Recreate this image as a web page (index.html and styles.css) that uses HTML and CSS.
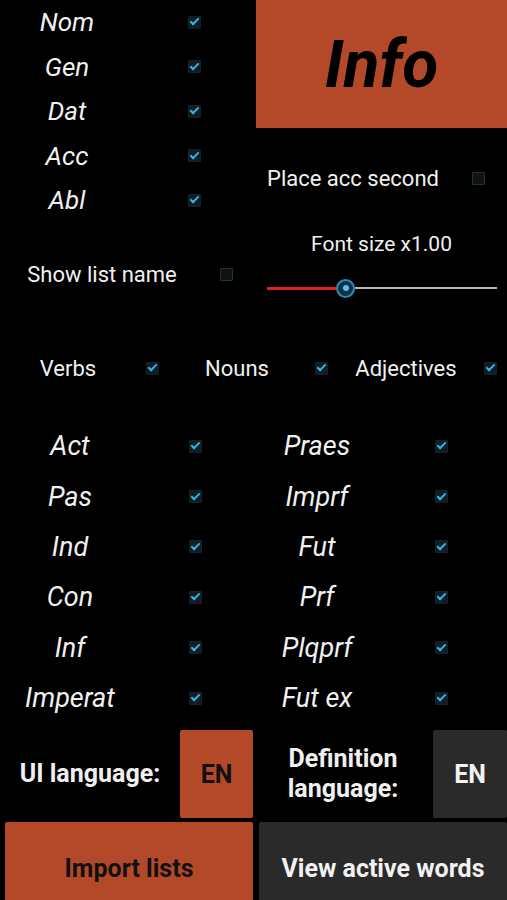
FILE: index.html
```html
<!DOCTYPE html>
<html lang="en">
<head>
    <meta charset="UTF-8">
    <meta name="viewport" content="width=device-width, initial-scale=1.0">
    <title>Settings</title>
    <link rel="stylesheet" href="styles.css">
</head>
<body>
    <div class="top">
        <div class="left">
            <div class="case-row"><span class="case">Nom</span><span class="check on"></span></div>
            <div class="case-row"><span class="case">Gen</span><span class="check on"></span></div>
            <div class="case-row"><span class="case">Dat</span><span class="check on"></span></div>
            <div class="case-row"><span class="case">Acc</span><span class="check on"></span></div>
            <div class="case-row"><span class="case">Abl</span><span class="check on"></span></div>
            <div class="show-row"><span class="label">Show list name</span><span class="check"></span></div>
        </div>
        <div class="right">
            <button class="info-btn">Info</button>
            <div class="acc-row"><span class="label">Place acc second</span><span class="check"></span></div>
            <div class="font-size">Font size x1.00</div>
            <div class="slider">
                <span class="track-done"></span>
                <span class="thumb"></span>
                <span class="track-rest"></span>
            </div>
        </div>
    </div>

    <div class="types">
        <div class="type"><span class="label">Verbs</span><span class="check on"></span></div>
        <div class="type"><span class="label">Nouns</span><span class="check on"></span></div>
        <div class="type"><span class="label">Adjectives</span><span class="check on"></span></div>
    </div>

    <div class="forms">
        <span class="case">Act</span><span class="check on"></span>
        <span class="case">Praes</span><span class="check on"></span>
        <span class="case">Pas</span><span class="check on"></span>
        <span class="case">Imprf</span><span class="check on"></span>
        <span class="case">Ind</span><span class="check on"></span>
        <span class="case">Fut</span><span class="check on"></span>
        <span class="case">Con</span><span class="check on"></span>
        <span class="case">Prf</span><span class="check on"></span>
        <span class="case">Inf</span><span class="check on"></span>
        <span class="case">Plqprf</span><span class="check on"></span>
        <span class="case">Imperat</span><span class="check on"></span>
        <span class="case">Fut ex</span><span class="check on"></span>
    </div>

    <div class="lang-row">
        <div class="lang-label">UI language:</div>
        <button class="lang-btn orange">EN</button>
        <div class="lang-label">Definition<br>language:</div>
        <button class="lang-btn gray">EN</button>
    </div>

    <div class="buttons">
        <button class="big-btn orange">Import lists</button>
        <button class="big-btn gray">View active words</button>
    </div>
</body>
</html>
```

FILE: styles.css
```css
body {
    margin: 0;
    width: 507px;
    height: 900px;
    overflow: hidden;
    background-color: #000;
    color: #f0f0f0;
    font-family: Roboto, "Noto Sans", sans-serif;
}

button {
    border: none;
    margin: 0;
    padding: 0;
    font-family: inherit;
    cursor: pointer;
}

.orange {
    background-color: #b4492a;
    color: #111;
}

.gray {
    background-color: #2a2a2a;
    color: #f2f2f2;
}

/* casillas */
.check {
    width: 11px;
    height: 11px;
    background-color: #0d1418;
    border: 1px solid #2a2f33;
    border-radius: 1px;
    display: flex;
    align-items: center;
    justify-content: center;
    justify-self: center;
}

.check.on {
    background-color: #111c23;
    border-color: #142128;
}

.check.on::after {
    content: "";
    width: 3px;
    height: 7px;
    margin-top: -3px;
    border-right: 2px solid #33b5e5;
    border-bottom: 2px solid #33b5e5;
    transform: rotate(45deg);
}

.case {
    font-style: italic;
    font-size: 26px;
    text-align: center;
    justify-self: center;
}

.label {
    font-size: 22px;
    text-align: center;
}

/* parte superior */
.top {
    display: flex;
    height: 300px;
}

.left {
    width: 256px;
}

.case-row {
    display: grid;
    grid-template-columns: 134px 120px;
    align-items: center;
    height: 44.5px;
}

.show-row {
    display: grid;
    grid-template-columns: 204px 44px;
    align-items: center;
    height: 40px;
    margin-top: 32px;
}

.right {
    flex: 1;
}

.info-btn {
    display: block;
    width: 100%;
    height: 128px;
    background-color: #b4492a;
    color: #000;
    font-size: 66px;
    font-weight: bold;
    font-style: italic;
}

.acc-row {
    display: grid;
    grid-template-columns: 194px 57px;
    align-items: center;
    height: 40px;
    margin-top: 30px;
}

.font-size {
    text-align: center;
    font-size: 21px;
    line-height: 24px;
    margin-top: 34px;
}

.slider {
    display: flex;
    align-items: center;
    height: 20px;
    margin-top: 22px;
    padding: 0 10px 0 11px;
}

.track-done {
    flex: 0 0 69px;
    height: 3px;
    background-color: #e0201c;
}

.track-rest {
    flex: 1;
    height: 2px;
    background-color: #b8b8b8;
}

.thumb {
    width: 15px;
    height: 15px;
    border: 2px solid #2a8db5;
    border-radius: 50%;
    background-color: #123040;
    display: flex;
    align-items: center;
    justify-content: center;
}

.thumb::after {
    content: "";
    width: 6px;
    height: 6px;
    border-radius: 50%;
    background-color: #4fc3f7;
}

/* tipos */
.types {
    display: flex;
    margin-top: 48px;
    height: 40px;
}

.type {
    display: grid;
    grid-template-columns: 136px 32px;
    align-items: center;
    width: 169px;
}

/* formas verbales */
.forms {
    display: grid;
    grid-template-columns: 140px 110px 134px 114px;
    grid-auto-rows: 50.4px;
    align-items: center;
    margin-top: 33px;
}

.forms .case {
    font-size: 27px;
}

/* idiomas */
.lang-row {
    display: grid;
    grid-template-columns: 180px 73px 180px 74px;
    height: 88px;
    margin-top: 7px;
}

.lang-label {
    display: flex;
    align-items: center;
    justify-content: center;
    text-align: center;
    font-size: 25px;
    font-weight: bold;
    line-height: 30px;
}

.lang-btn {
    font-size: 25px;
    font-weight: bold;
    border-radius: 2px;
}

.buttons {
    display: flex;
    gap: 6px;
    margin-top: 4px;
    padding-left: 5px;
    height: 92px;
}

.big-btn {
    flex: 1;
    font-size: 25px;
    font-weight: bold;
    border-radius: 2px 2px 0 0;
}
```
